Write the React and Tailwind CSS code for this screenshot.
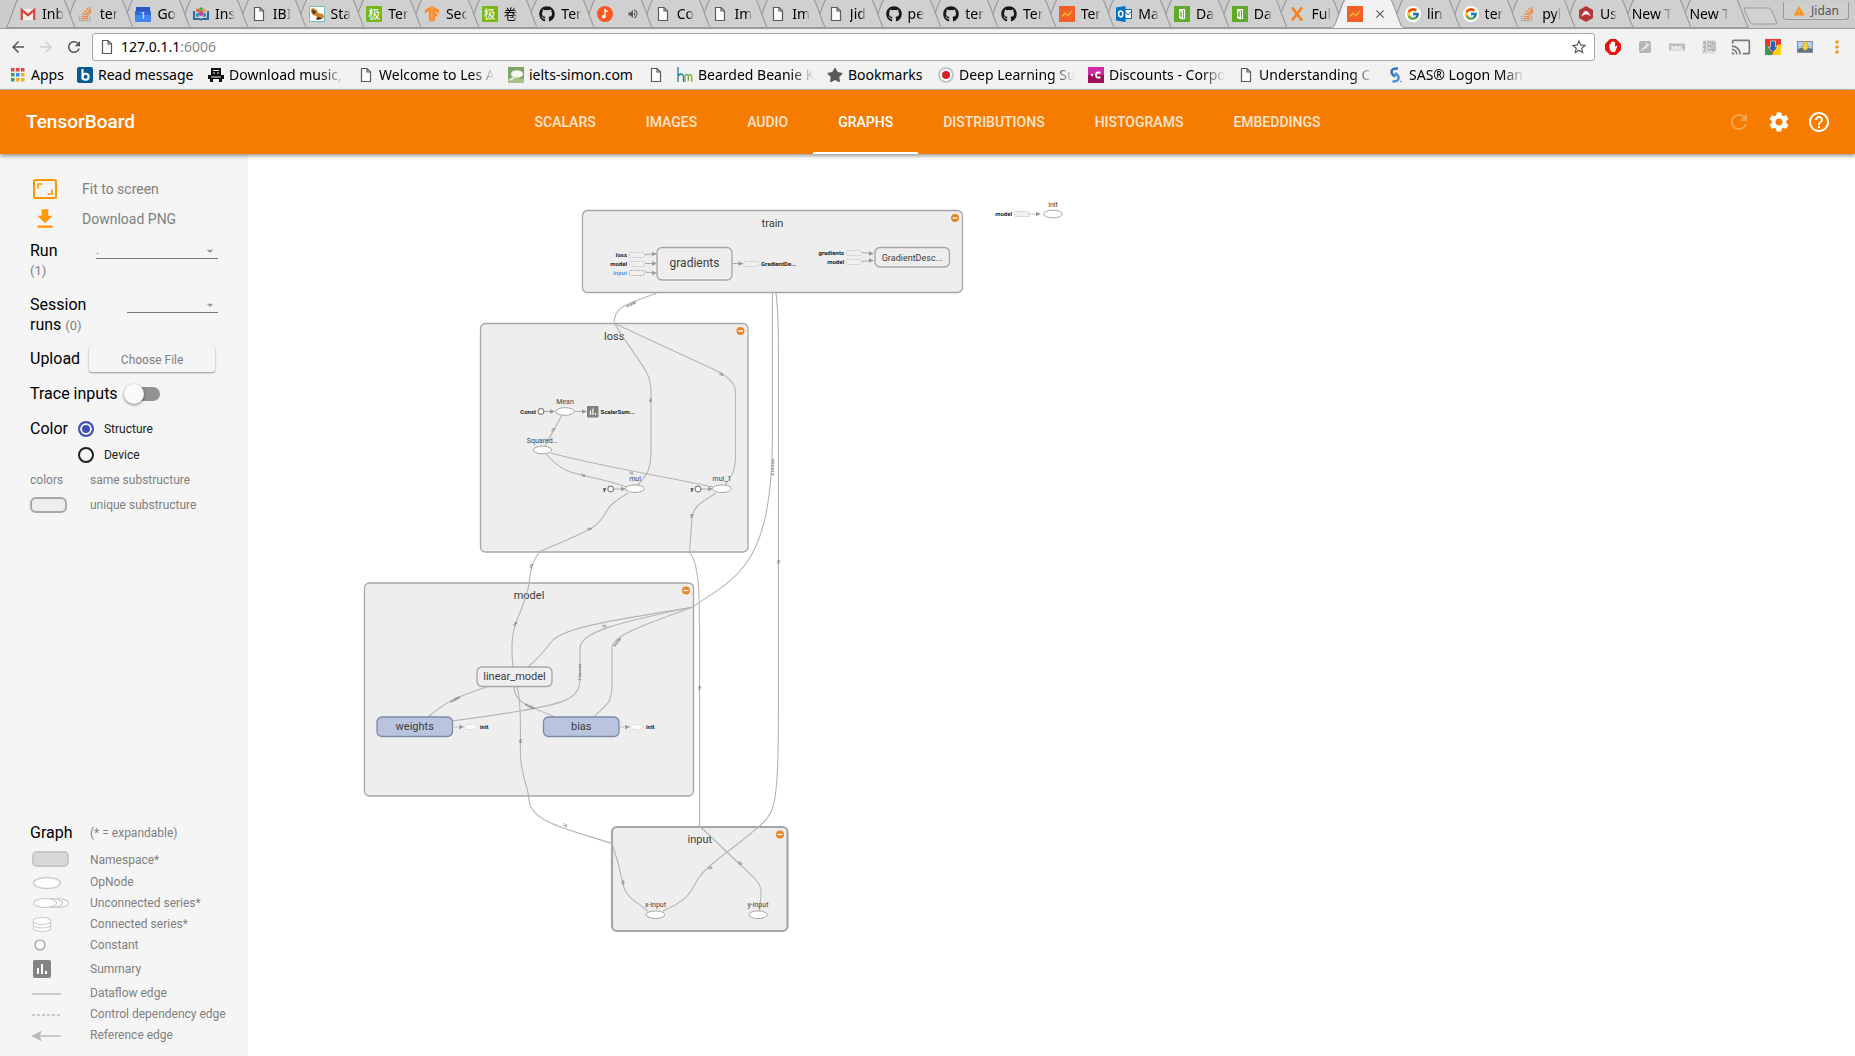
import React from "react";
import { FaGithub, FaStar } from "react-icons/fa";
import { FcGoogle } from "react-icons/fc";
import { SiTensorflow } from "react-icons/si";
import {
  MdRefresh,
  MdSettings,
  MdHelpOutline,
  MdArrowBack,
  MdArrowForward,
  MdStarBorder,
  MdCast,
  MdMoreVert,
  MdVolumeUp,
  MdWarning,
  MdArrowDropDown,
  MdFileDownload,
  MdClose,
} from "react-icons/md";

/* ---------- small icons ---------- */

const FileIcon = () => (
  <svg viewBox="0 0 16 16" className="h-4 w-4 shrink-0">
    <path d="M3.5 1.5h5.5l3.5 3.5v9.5h-9z" fill="#fdfdfd" stroke="#5a5a5a" strokeWidth="1.2" />
    <path d="M9 1.5v3.5h3.5" fill="none" stroke="#5a5a5a" strokeWidth="1.2" />
  </svg>
);

const Gmail = () => (
  <svg viewBox="0 0 16 16" className="h-4 w-4">
    <rect x="1" y="3" width="14" height="11" fill="#f1eeee" />
    <path d="M1.8 14V3.8L8 9.2l6.2-5.4V14" fill="none" stroke="#d5483b" strokeWidth="2.2" />
  </svg>
);

const StackOverflow = () => (
  <svg viewBox="0 0 16 16" className="h-4 w-4">
    <path d="M1.5 10v4.7h10.3V10" fill="none" stroke="#b3afab" strokeWidth="1.3" />
    <path d="M3.3 12.7h6.8M3.5 10.2l6.7.7M4.3 7.4l6.3 1.9M6 4.7l5.5 3.5M8.5 2.2l4 5M11.6.8l1.2 6" stroke="#ef8236" strokeWidth="1.2" />
  </svg>
);

const Calendar = () => (
  <svg viewBox="0 0 16 16" className="h-4 w-4">
    <rect x="1" y="1" width="14" height="6" fill="#2a56c6" />
    <rect x="0" y="5" width="16" height="11" rx="1" fill="#4285f4" />
    <rect x="0" y="5" width="16" height="4" fill="#3367d6" />
    <text x="8" y="12.5" fontSize="9" textAnchor="middle" fill="#fff" fontFamily="Roboto, sans-serif">1</text>
  </svg>
);

const BookPeople = () => (
  <svg viewBox="0 0 16 16" className="h-4 w-4">
    <path d="M0 5h2v7h5l1 1 1-1h5V5h2v9H9l-1 1-1-1H0z" fill="#2b6d96" />
    <circle cx="5" cy="4.5" r="1.9" fill="#e7653b" />
    <circle cx="11" cy="4.500" r="1.9" fill="#e2a13b" />
    <circle cx="8" cy="3" r="1.7" fill="#4a9a52" />
    <circle cx="8" cy="7.500" r="2.400" fill="#c64682" />
    <circle cx="4.500" cy="9" r="1.900" fill="#3b8fc6" />
    <circle cx="11.500" cy="9" r="1.900" fill="#3b8fc6" />
  </svg>
);

const Puppy = () => (
  <svg viewBox="0 0 16 16" className="h-4 w-4">
    <rect x="0.5" y="0.5" width="15" height="15" fill="#fff" stroke="#6fbcb9" />
    <path d="M2 3l2-1 4 2 1 3 5 1 1 3-2 2H9l-2-3-3-1-2-3z" fill="#c9832c" />
    <path d="M3 4l3 1 1 2-3 1zM7 12l4-1 2 2-5 1z" fill="#4a3015" />
  </svg>
);

const Ji = () => (
  <span className="flex h-4 w-4 items-center justify-center rounded-[1px] bg-[#78b614] font-['Noto_Sans_CJK_SC',sans-serif] text-[12px] leading-4 text-white">
    极
  </span>
);

const TF = () => <SiTensorflow className="h-4 w-4 text-[#ff8b22]" />;
const GitHub = () => <FaGithub className="h-4 w-4 text-[#191717]" />;
const Google = () => (
  <span className="flex h-4 w-4 items-center justify-center rounded-full bg-white">
    <FcGoogle className="h-[14px] w-[14px]" />
  </span>
);

const Music = () => (
  <svg viewBox="0 0 16 16" className="h-4 w-4">
    <circle cx="8" cy="8" r="8" fill="#fc5722" />
    <circle cx="6.8" cy="10.6" r="1.9" fill="#fff" />
    <path d="M8 11V3.6l2.6 2.2" fill="none" stroke="#fff" strokeWidth="1.3" />
  </svg>
);

const TensorBoardIcon = () => (
  <svg viewBox="0 0 16 16" className="h-4 w-4">
    <rect width="16" height="16" fill="#f1622b" />
    <path d="M3 10.5l3-3.2 3 2.4L13 5" fill="none" stroke="#fdb62f" strokeWidth="1.4" />
  </svg>
);

const Outlook = () => (
  <svg viewBox="0 0 16 16" className="h-4 w-4">
    <rect x="8" y="3.5" width="7.5" height="9" fill="#fff" stroke="#0072c6" />
    <path d="M8.5 5l3.5 4 3.5-4" fill="none" stroke="#0072c6" />
    <path d="M0 1.5L9.5 0v16L0 14.5z" fill="#0072c6" />
    <ellipse cx="4.7" cy="8" rx="2.1" ry="2.9" fill="none" stroke="#fff" strokeWidth="1.5" />
  </svg>
);

const DataDoor = () => (
  <svg viewBox="0 0 16 16" className="h-4 w-4">
    <rect width="16" height="16" fill="#5fab28" />
    <path d="M5.500 3.500h5v9h-2" fill="none" stroke="#fff" strokeWidth="1.200" />
    <path d="M5 3l4 1.800v9L5 12z" fill="#fff" />
    <path d="M6.300 5.200l1.400.6v5.500l-1.400-.6z" fill="#5fab28" />
  </svg>
);

const OrangeX = () => (
  <svg viewBox="0 0 16 16" className="h-4 w-4">
    <path d="M3 1.5l10 13M13 1.5L3 14.5" stroke="#f58220" strokeWidth="2.8" />
  </svg>
);

const RedHex = () => (
  <svg viewBox="0 0 16 16" className="h-4 w-4">
    <path d="M8 0l7 4v8l-7 4-7-4V4z" fill="#b3363a" />
    <path d="M3 10.5C5 8 5.500 5 8 5s3 3 5 5.500l-3-2H7z" fill="#fff" />
  </svg>
);

/* ---------- browser tabs ---------- */

const tabs = [
  [Gmail, "Inb"],
  [StackOverflow, "ter"],
  [Calendar, "Go"],
  [BookPeople, "Ins"],
  [FileIcon, "IBI"],
  [Puppy, "Sta"],
  [Ji, "Ter"],
  [TF, "Sec"],
  [Ji, "卷"],
  [GitHub, "Ter"],
  [Music, ""],
  [FileIcon, "Co"],
  [FileIcon, "Im"],
  [FileIcon, "Im"],
  [FileIcon, "Jid"],
  [GitHub, "pe"],
  [GitHub, "ter"],
  [GitHub, "Ter"],
  [TensorBoardIcon, "Ter"],
  [Outlook, "Ma"],
  [DataDoor, "Da"],
  [DataDoor, "Da"],
  [OrangeX, "Ful"],
  [TensorBoardIcon, null],
  [Google, "lin"],
  [Google, "ter"],
  [StackOverflow, "pyl"],
  [RedHex, "Us"],
  [null, "New T"],
  [null, "New T"],
];

const FADE = "[mask-image:linear-gradient(to_right,black_65%,transparent)]";
const FADE_LONG = "[mask-image:linear-gradient(to_right,black_80%,transparent)]";

function Tab({ icon: Icon, label, index }) {
  const active = label === null;
  return (
    <div className="relative h-[29px] min-w-0 flex-1" style={{ zIndex: active ? 50 : 40 - index }}>
      <svg viewBox="0 0 70 29" preserveAspectRatio="none" className="absolute -left-[6px] top-0 h-[29px] w-[calc(100%+12px)]">
        <path
          d="M0 28.500C3 27 9 3 12 0.500H58C61 3 67 27 70 28.500"
          fill={active ? "#f2f2f2" : "#d0d0d0"}
          stroke="#9b9b9b"
          strokeWidth="1.2"
        />
        <path d="M0 28.500H70" stroke={active ? "#f2f2f2" : "#9b9b9b"} />
      </svg>
      <div className={Icon ? "relative flex h-[29px] items-center gap-[6px] pl-2" : "relative flex h-[29px] items-center pl-1"}>
        {Icon && <span className="shrink-0"><Icon /></span>}
        {active ? (
          <button aria-label="Close tab" className="ml-1 text-[#5a5a5a]"><MdClose className="h-[14px] w-[14px]" /></button>
        ) : label === "" ? (
          <MdVolumeUp className="ml-2 h-3 w-3 text-[#5a5a5a]" />
        ) : (
          <span className={`${FADE} whitespace-nowrap text-[14px] leading-5`}>{label}</span>
        )}
      </div>
    </div>
  );
}

function TabStrip() {
  return (
    <div className="flex h-[29px] items-end border-b border-[#9b9b9b] bg-[#cccccc] pl-3">
      <div className="isolate flex min-w-0 flex-1">
        {tabs.map(([icon, label], i) => (
          <Tab key={i} icon={icon} label={label} index={i} />
        ))}
      </div>
      <button aria-label="New tab" className="mb-[3px] w-[34px]">
        <svg viewBox="0 0 34 18" className="h-[18px] w-[34px]">
          <path d="M1.500 1h24q2 0 3 2l5 12q.5 2-1.500 2h-22q-2 0-3-2l-5.500-12q-.7-2 1-2z" fill="#d2d2d2" stroke="#9b9b9b" />
        </svg>
      </button>
      <button className="mb-2 ml-[6px] mr-[6px] flex h-[18px] w-[66px] items-center justify-center gap-[6px] rounded-b-[3px] border border-t-0 border-[#999] bg-[#cfcfcf] text-[12px] leading-4 text-[#555]">
        <MdWarning className="h-3 w-3 text-[#fb9214]" />
        Jidan
      </button>
    </div>
  );
}

/* ---------- address bar ---------- */

const extensions = [
  <svg viewBox="0 0 16 16" className="h-4 w-4">
    <path d="M5 0h6l5 5v6l-5 5H5l-5-5V5z" fill="#e8130f" />
    <path d="M4.500 8V5h1.300V3h1.400v-.8h1.500V3h1.400v5l1.200-1.500 1 .8L10 13H6.500q-2-2-2-5z" fill="#fff" />
  </svg>,
  <svg viewBox="0 0 16 16" className="h-4 w-4">
    <rect x="2" y="2" width="12" height="12" rx="2" fill="#b5b5b5" />
    <path d="M4.500 11.500l5-5M9 3.500l.6 1.700L11.500 6 9.800 7 9 9 8 7" stroke="#ececec" strokeWidth="1.300" fill="none" />
  </svg>,
  <svg viewBox="0 0 16 16" className="h-4 w-4">
    <rect y="4.500" width="16" height="7" fill="#bdbdbd" />
    <text x="8" y="10.500" fontSize="6" fontWeight="700" textAnchor="middle" fill="#fff" fontFamily="Roboto, sans-serif">XML</text>
  </svg>,
  <svg viewBox="0 0 16 16" className="h-4 w-4">
    <rect x="1" y="1" width="14" height="14" fill="#e2e2e2" />
    <path d="M2 4h3M2 8h3M4 2v11M7 3h3v8H7zM7 7h3M12 2v11M11 4h3v7h-3M2 13l3-2" stroke="#b0b0b0" fill="none" strokeWidth="1.300" />
  </svg>,
  <MdCast className="h-5 w-5 text-[#7a7a7a]" />,
  <svg viewBox="0 0 16 16" className="h-4 w-4">
    <rect width="16" height="16" fill="#e6392b" />
    <path d="M0 3l7 13H0z" fill="#2ba24c" />
    <path d="M16 5v11H7l5-10z" fill="#fdd00b" />
    <path d="M5.500 2h5v6H13l-5 5.500L3 8h2.500z" fill="#2765b0" stroke="#fff" strokeWidth=".6" />
  </svg>,
  <svg viewBox="0 0 16 16" className="h-4 w-4">
    <rect x=".5" y="2.500" width="15" height="11" fill="#b3d0ee" stroke="#8c8c8c" />
    <path d="M1 10l4-1.500 10 1V13H1z" fill="#5d7386" />
    <path d="M6.500 2.500h3.500v5h2.500L8.300 12 4 7.500h2.500z" fill="#f6d33c" stroke="#b18a12" strokeWidth=".5" />
  </svg>,
  <MdMoreVert className="h-5 w-5 text-[#fb9214]" />,
];

function AddressBar() {
  return (
    <div className="flex h-[35px] items-center">
      <div className="flex w-[92px] items-center gap-[10px] pl-[9px] text-[#555]">
        <button aria-label="Back"><MdArrowBack className="h-[18px] w-[18px]" /></button>
        <button aria-label="Forward" className="text-[#d0d0d0]"><MdArrowForward className="h-[18px] w-[18px]" /></button>
        <button aria-label="Reload"><MdRefresh className="h-[18px] w-[18px]" /></button>
      </div>
      <div className="flex h-7 min-w-0 flex-1 items-center gap-[6px] rounded-[3px] border border-[#a9a9a9] bg-white px-[6px]">
        <FileIcon />
        <span className="relative h-5 flex-1 text-[14px] leading-5">
          <input aria-label="Address" defaultValue="127.0.1.1:6006" className="h-5 w-full bg-transparent text-transparent outline-none" />
          <span aria-hidden="true" className="pointer-events-none absolute inset-0">127.0.1.1<span className="text-[#8a8a8a]">:6006</span></span>
        </span>
        <button aria-label="Bookmark this page" className="text-[#5a5a5a]"><MdStarBorder className="h-[18px] w-[18px]" /></button>
      </div>
      <div className="flex w-[260px] items-center pl-[2px]">
        {extensions.map((icon, i) => (
          <button key={i} aria-label={`Extension ${i + 1}`} className="flex w-8 items-center justify-center">{icon}</button>
        ))}
      </div>
    </div>
  );
}

/* ---------- bookmarks ---------- */

const AppsIcon = () => (
  <svg viewBox="0 0 16 16" className="h-4 w-4 shrink-0">
    {["#e8453c", "#e8453c", "#e8453c", "#34a05c", "#3b8bf0", "#f2b01e", "#34a05c", "#f2b01e", "#f2b01e"].map((c, i) => (
      <rect key={i} x={1 + (i % 3) * 5} y={1 + Math.floor(i / 3) * 5} width="3.500" height="3.500" fill={c} />
    ))}
  </svg>
);

const BIcon = () => (
  <svg viewBox="0 0 16 16" className="h-4 w-4 shrink-0">
    <rect width="16" height="16" rx="2" fill="#0c5a94" />
    <path d="M5.500 2v10.500" stroke="#fff" strokeWidth="2" />
    <circle cx="8.600" cy="9.800" r="3" fill="none" stroke="#fff" strokeWidth="2" />
  </svg>
);

const DiskIcon = () => (
  <svg viewBox="0 0 16 16" className="h-4 w-4 shrink-0">
    <path d="M3 1h10v7H3zM0 8h16v4H0zM2 12h3v3H2zM11 12h3v3h-3z" fill="#111" />
    <path d="M5 3.500h6M5 6h2M9 6h2M3 10h10M6 13.500h4" stroke="#eee" />
  </svg>
);

const LeafIcon = () => (
  <svg viewBox="0 0 16 16" className="h-4 w-4 shrink-0">
    <rect width="16" height="16" fill="#7ea565" />
    <ellipse cx="9" cy="7" rx="6" ry="3.800" fill="#f4f7f0" />
    <path d="M0 12q4-3 9-1t7 0v5H0z" fill="#a9c38e" />
    <path d="M2 13q3-1 5-4" stroke="#f4f7f0" fill="none" strokeWidth="1.500" />
  </svg>
);

const HmIcon = () => (
  <svg viewBox="0 0 16 16" className="h-4 w-4 shrink-0">
    <path d="M1 0v15M1 9q3-4 5.500 0v6" fill="none" stroke="#1c7f9c" strokeWidth="1.300" />
    <path d="M8 15V9q1.700-3 3.300 0v5M11.300 9q1.700-3 3.500 0v6" fill="none" stroke="#74ac3c" strokeWidth="1.300" />
  </svg>
);

const StarIcon = () => <FaStar className="h-4 w-4 shrink-0 text-[#5a5a5a]" />;

const RedDot = () => (
  <svg viewBox="0 0 16 16" className="h-4 w-4 shrink-0">
    <circle cx="8" cy="8" r="7" fill="#fff" stroke="#c6c6c6" strokeWidth="2" />
    <circle cx="8" cy="8" r="4" fill="#d91f26" />
  </svg>
);

const CIcon = () => (
  <svg viewBox="0 0 16 16" className="h-4 w-4 shrink-0">
    <rect width="16" height="8" fill="#d12ba5" />
    <rect y="8" width="16" height="8" fill="#9c1155" />
    <path d="M12.500 5.500H10Q8 5.500 8 8t2 2.500h2.500" fill="none" stroke="#fff" strokeWidth="1.800" />
    <circle cx="4" cy="8" r="1.200" fill="#fff" />
  </svg>
);

const SasIcon = () => (
  <svg viewBox="0 0 16 16" className="h-4 w-4 shrink-0">
    <path d="M10 1.500Q3.500 1 3.500 5q0 2.500 4 4.500" fill="none" stroke="#2f78c4" strokeWidth="2.500" />
    <path d="M4.500 14.500q6.500 0 6-4Q10.500 8 7 6" fill="none" stroke="#4b93dc" strokeWidth="2.500" />
    <circle cx="13" cy="14.500" r=".8" fill="#2f78c4" />
  </svg>
);

const bookmarks = [
  [AppsIcon, "Apps", "w-[33px]"],
  [BIcon, "Read message", "w-[97px]"],
  [DiskIcon, "Download music,", "w-[116px]", true],
  [FileIcon, "Welcome to Les A", "w-[116px]", true],
  [LeafIcon, "ielts-simon.com", "w-[106px]"],
  [FileIcon, "", "w-0"],
  [HmIcon, "Bearded Beanie K", "w-[116px]", true],
  [StarIcon, "Bookmarks", "w-[77px]"],
  [RedDot, "Deep Learning Su", "w-[116px]", true],
  [CIcon, "Discounts - Corpo", "w-[116px]", true],
  [FileIcon, "Understanding C", "w-[116px]", true],
  [SasIcon, "SAS® Logon Man", "w-[116px]", true],
];

function Bookmarks() {
  return (
    <nav className="flex h-[26px] items-center gap-[13px] border-b border-[#b5b5b5] pb-[3px] pl-[10px]">
      {bookmarks.map(([Icon, label, width, fade], i) => (
        <a key={i} href="#" aria-label={label || "Untitled"} className={label ? "flex items-center gap-[5px]" : "flex items-center"}>
          <Icon />
          <span className={`${width} ${fade ? FADE_LONG : ""} whitespace-nowrap text-[14px] leading-5`}>{label}</span>
        </a>
      ))}
    </nav>
  );
}

/* ---------- application header ---------- */

const sections = ["SCALARS", "IMAGES", "AUDIO", "GRAPHS", "DISTRIBUTIONS", "HISTOGRAMS", "EMBEDDINGS"];

function Header() {
  return (
    <header className="relative z-10 grid h-16 grid-cols-[1fr_auto_1fr] items-center bg-[#f57c00] px-[26px] text-white shadow-[0_2px_4px_rgba(0,0,0,0.4)]">
      <h1 className="text-[19px] font-medium leading-6">TensorBoard</h1>
      <nav className="flex h-16">
        {sections.map((s) => (
          <a
            key={s}
            href="#"
            className={
              s === "GRAPHS"
                ? "flex items-center border-b-2 border-t-2 border-b-white border-t-transparent px-[25px] text-[14px] font-medium"
                : "flex items-center px-[25px] text-[14px] font-medium text-white/80"
            }
          >
            {s}
          </a>
        ))}
      </nav>
      <div className="-mr-[2px] flex justify-end gap-4">
        <button aria-label="Reload" disabled className="text-white/30"><MdRefresh className="h-6 w-6" /></button>
        <button aria-label="Settings"><MdSettings className="h-6 w-6" /></button>
        <button aria-label="Help"><MdHelpOutline className="h-6 w-6" /></button>
      </div>
    </header>
  );
}

/* ---------- side panel ---------- */

const legend = [
  ["Namespace*", "h-[22px]", <rect x="3" y="0" width="35" height="14" rx="4" fill="#d8d8d8" stroke="#c8c8c8" strokeWidth="2" />],
  ["OpNode", "h-[21px]", <ellipse cx="17" cy="9" rx="13.500" ry="5.500" fill="#fff" stroke="#ccc" strokeWidth="1.500" />],
  [
    "Unconnected series*",
    "h-[21px]",
    <g fill="#fff" stroke="#ccc" strokeWidth="1.200">
      <ellipse cx="27" cy="8" rx="11.500" ry="4.500" />
      <ellipse cx="21" cy="8" rx="11.500" ry="4.500" />
      <ellipse cx="15" cy="8" rx="11.500" ry="4.500" />
    </g>,
  ],
  [
    "Connected series*",
    "h-[21px]",
    <g fill="#fff" stroke="#ccc" strokeWidth="1.200">
      <ellipse cx="12" cy="12" rx="9" ry="3.500" />
      <ellipse cx="12" cy="8.500" rx="9" ry="3.500" />
      <ellipse cx="12" cy="5" rx="9" ry="3.500" />
    </g>,
  ],
  ["Constant", "h-[21px]", <circle cx="10" cy="8" r="5" fill="#fff" stroke="#999" strokeWidth="1.200" />],
  [
    "Summary",
    "h-[27px]",
    <g>
      <rect x="3" y="-1" width="18" height="18" rx="2" fill="#848484" />
      <path d="M8 13V7M12 13V3M16 13v-3" stroke="#fff" strokeWidth="2" />
    </g>,
  ],
  ["Dataflow edge", "h-[21px]", <path d="M2 9h29" stroke="#bbb" strokeWidth="1.500" />],
  ["Control dependency edge", "h-[21px]", <path d="M2 9h29" stroke="#bbb" strokeWidth="1.300" strokeDasharray="3 2" />],
  [
    "Reference edge",
    "h-[21px]",
    <g>
      <path d="M8 9h23" stroke="#bbb" strokeWidth="1.500" />
      <path d="M1 9l11-5.500-2.500 5.500 2.500 5.500z" fill="#bbb" />
    </g>,
  ],
];

function Picker({ label, width, children }) {
  return (
    <div className={`${width} relative h-[18px] border-b border-[#757575]`}>
      <select aria-label={label} className="block h-full w-full appearance-none bg-transparent text-[12px] leading-4 text-[#808080] outline-none">
        {children}
      </select>
      <MdArrowDropDown className="pointer-events-none absolute right-0 top-[2px] h-4 w-4 text-[#9a9a9a]" />
    </div>
  );
}

function Sidebar() {
  return (
    <aside className="flex w-[248px] shrink-0 flex-col justify-between bg-[#f5f5f5] pb-[11px] pl-[30px] pt-5 text-[12px] text-[#808080]">
      <div>
        <button className="flex h-[30px] w-full items-center text-left text-[14px]">
          <svg viewBox="0 0 24 20" className="ml-[3px] mr-[25px] h-5 w-6">
            <rect x="1" y="1" width="22" height="18" rx="1.500" fill="none" stroke="#ff9800" strokeWidth="2" />
            <path d="M5 9.500V5h4.500M19 10.500V15h-4.500" fill="none" stroke="#ff9800" strokeWidth="1.600" />
          </svg>
          Fit to screen
        </button>
        <button className="flex h-[30px] w-full items-center text-left text-[14px]">
          <MdFileDownload className="ml-[2px] mr-6 h-[26px] w-[26px] text-[#ff9800]" />
          Download PNG
        </button>
        <div className="mt-[7px] flex h-[52px] items-start pr-[30px]">
          <div className="flex-1 leading-5">
            <div className="text-[16px] text-black">Run</div>
            <div className="text-[13px]">(1)</div>
          </div>
          <Picker label="Run" width="w-[122px]"><option>.</option></Picker>
        </div>
        <div className="mt-[2px] flex h-[40px] items-start pr-[30px]">
          <div className="flex-1 text-[16px] leading-5 text-black">
            Session<br />runs <span className="text-[13px] text-[#808080]">(0)</span>
          </div>
          <Picker label="Session runs" width="w-[91px]" />
        </div>
        <div className="mt-[10px] flex h-[28px] items-center gap-[9px]">
          <span className="text-[16px] text-black">Upload</span>
          <button className="h-[26px] w-[126px] rounded-[3px] bg-[#f5f5f5] pt-[2px] text-[12px] shadow-[0_1px_2px_rgba(0,0,0,0.4)]">Choose File</button>
        </div>
        <label className="mt-2 flex h-[26px] items-center gap-[6px] text-[16px] text-black">
          Trace inputs
          <span className="relative flex h-5 w-9 items-center">
            <input type="checkbox" role="switch" className="ml-auto h-[14px] w-7 appearance-none rounded-full bg-[#929292]" />
            <span className="pointer-events-none absolute left-0 top-0 h-5 w-5 rounded-full bg-[#fafafa] shadow-[0_1px_3px_rgba(0,0,0,0.5)]" />
          </span>
        </label>
        <div className="mt-[9px] flex gap-[10px]">
          <span className="text-[16px] leading-[26px] text-black">Color</span>
          <div className="text-[12px] text-[#212121]">
            <label className="flex h-[26px] items-center gap-[10px]">
              <input type="radio" name="color" defaultChecked className="h-4 w-4 appearance-none rounded-full border-2 border-[#3f51b5] bg-[#3f51b5] shadow-[inset_0_0_0_2px_#f5f5f5]" />
              Structure
            </label>
            <label className="flex h-[26px] items-center gap-[10px]">
              <input type="radio" name="color" className="h-4 w-4 appearance-none rounded-full border-2 border-[#212121]" />
              Device
            </label>
          </div>
        </div>
        <div className="grid grid-cols-[60px_1fr] leading-[25px]">
          <span>colors</span>
          <span>same substructure</span>
          <span className="mt-[4px] h-4 w-[37px] rounded-[6px] border-2 border-[#a8a8a8] bg-[#eee]" />
          <span>unique substructure</span>
        </div>
      </div>
      <div>
        <div className="mb-[6px] flex h-[21px] items-center">
          <span className="w-[60px] text-[16px] text-black">Graph</span>
          <span>(* = expandable)</span>
        </div>
        {legend.map(([name, height, shape]) => (
          <div key={name} className={`${height} flex items-center`}>
            <svg viewBox="0 0 60 16" className="h-4 w-[60px] overflow-visible">{shape}</svg>
            <span className="whitespace-nowrap">{name}</span>
          </div>
        ))}
      </div>
    </aside>
  );
}

/* ---------- graph ---------- */

function Scope({ x, y, w, h, title, thick }) {
  return (
    <g>
      <rect x={x} y={y} width={w} height={h} rx="5" fill="#eee" stroke="#a6a6a6" strokeWidth={thick ? 2.2 : 1.3} />
      <text x={x + w / 2} y={y + 16} fontSize="11" textAnchor="middle" fill="#3d3d3d">{title}</text>
      <circle cx={x + w - 7.500} cy={y + 7.500} r="4" fill="#e98325" />
      <path d={`M${x + w - 10} ${y + 7.500}h5`} stroke="#fff" strokeWidth="1.300" />
    </g>
  );
}

function Node({ x, y, w, h, title, size = 11, blue }) {
  return (
    <g>
      <rect x={x} y={y} width={w} height={h} rx="5" fill={blue ? "#b9c5de" : "#eee"} stroke={blue ? "#7d8aa5" : "#a6a6a6"} strokeWidth="1.300" />
      <text x={x + w / 2} y={y + h / 2 + 3.500} fontSize={size} textAnchor="middle" fill="#3d3d3d">{title}</text>
    </g>
  );
}

const Op = ({ x, y, title, dy = -8 }) => (
  <g>
    <ellipse cx={x} cy={y} rx="9.300" ry="3.800" fill="#fff" stroke="#a6a6a6" />
    <text x={x} y={y + dy} fontSize="7" textAnchor="middle" fill="#444">{title}</text>
  </g>
);

const Stub = ({ x, y, dark }) => (
  <rect x={x} y={y - 2.500} width="15" height="5" rx="1.500" fill="#f0f0f0" stroke={dark ? "#999" : "#bbb"} strokeWidth=".8" strokeDasharray="1.500 1" />
);

const Note = ({ x, y, children, end, color = "#222" }) => (
  <text x={x} y={y + 2} fontSize="6" fontWeight="700" fill={color} textAnchor={end ? "end" : "start"}>{children}</text>
);

function Arrow({ x1, y1, x2, y2, dashed }) {
  return (
    <g>
      <path d={`M${x1} ${y1}L${x2 - 3} ${y2}`} stroke="#aaa" strokeDasharray={dashed ? "1.500 1" : undefined} />
      <path d={`M${x2} ${y2}l-5 -2.200v4.400z`} fill="#9a9a9a" />
    </g>
  );
}

const Const = ({ x, y }) => <circle cx={x} cy={y} r="2.800" fill="#fff" stroke="#888" strokeWidth="1.200" />;

const edges = [
  // train to its inputs
  "M657 293L638 300C622 306 614 310 614 323.500",
  "M772.500 292V430C772.500 500 764 540 745 565C730 585 712 593 693 607",
  "M776 293C778 310 778.500 330 778.500 350V700C778.500 770 777 800 771 812C765 824 757 828 750 834C730 851 710 863 700 876C690 891 692 898 663 911",
  // inside loss
  "M614.500 323.500C640 365 651 370 651 392V450C651 472 646 475 638 485",
  "M614.500 323.500L715 370Q735.500 380 735.500 392V455C735.500 472 732 475 725 485",
  "M562 415L545 446",
  "M546 454C560 470 570 473 590 477Q612 482 627 487",
  "M551 453C590 464 640 472 713 487",
  // loss to model and input
  "M628 493C612 503 609 506 605 514C597 528 590 530 540 551.500C531 562 530 575 529 583C527 605 512 620 512 645Q512 660 513 667",
  "M716 493C700 503 693 507 692 518L689.500 552C700 565 699.500 600 699.500 640V826L730 855C745 870 760 880 761 890C761.500 900 760 902 759.500 911",
  // inside model
  "M693 607C630 618 570 625 553 640C545 649 545 652 528 667",
  "M693 607C620 622 580 632 580 648V680C580 700 560 704 520 711Q490 716 452 721",
  "M693 607C640 626 612 636 612 648V685C612 705 604 706 594 717",
  "M487 687C455 697 443 704 428 717",
  "M514 687C514 700 523 705 556 717",
  "M517 687C523 705 519 750 521 762C523 780 529 790 529 800C530 822 570 830 612 843.500",
  // inside input
  "M612 843.500C622 872 622 884 625 890C629 899 637 902 648 911",
];

const edgeLabels = [
  [631, 304, -25, "scalar"],
  [650.500, 400, 90, "16"],
  [721, 374, 30, "16"],
  [553, 430, -60, "16"],
  [583, 475, 17, "16"],
  [631, 473, 10, "16"],
  [589, 529, -25, "16"],
  [691, 516, -90, "16"],
  [531, 566, -70, "16"],
  [772.500, 467, -90, "4 tensors"],
  [778.500, 562, -90, "16"],
  [699.500, 688, -90, "16"],
  [604, 626, -10, "16"],
  [515, 624, -75, "16"],
  [579.500, 672, -90, "2 tensors"],
  [617, 642, -50, "scalar"],
  [455, 699, -27, "scalar"],
  [530, 706, 25, "scalar"],
  [520.500, 741, 90, "16"],
  [565, 825, 20, "16"],
  [623, 882, 75, "16"],
  [710, 868, -40, "16"],
  [740, 863, 42, "16"],
];

function Graph() {
  return (
    <svg viewBox="248 154 1607 902" className="block h-auto w-full font-[Roboto,sans-serif]" role="img" aria-label="Computation graph">
      <Scope x={582.5} y={210.5} w={380} h={82} title="train" />
      <Scope x={480.5} y={323.5} w={267.5} h={228.5} title="loss" />
      <Scope x={364.5} y={583} w={329} h={213} title="model" />
      <Scope x={612} y={827} w={175.5} h={104} title="input" thick />

      <g fill="none" stroke="#b5b5b5" strokeWidth="1.1">
        {edges.map((d) => <path key={d} d={d} />)}
      </g>
      {edgeLabels.map(([x, y, a, t], i) => (
        <text key={i} x={x} y={y + 1.500} fontSize="4" fontWeight="500" textAnchor="middle" fill="#666" transform={`rotate(${a} ${x} ${y})`}>{t}</text>
      ))}

      {/* train */}
      <Node x={657} y={247.500} w={75} h={32.500} title="gradients" size={12} />
      <Note x={627} y={255} end>loss</Note>
      <Note x={627} y={264} end>model</Note>
      <Note x={627} y={273} end color="#5b9bf0">input</Note>
      <Stub x={629.500} y={255} /><Stub x={629.500} y={264} /><Stub x={629.500} y={273} dark />
      <Arrow x1={645} y1={254.500} x2={657} y2={254} />
      <Arrow x1={645} y1={263.500} x2={657} y2={263.500} />
      <Arrow x1={645} y1={272} x2={657} y2={273} />
      <Arrow x1={732} y1={263.500} x2={743.500} y2={263.500} />
      <Stub x={744} y={264} />
      <Note x={761} y={264}>GradientDe...</Note>
      <Note x={844} y={253} end>gradients</Note>
      <Note x={844} y={262} end>model</Note>
      <Stub x={846.500} y={253} /><Stub x={846.500} y={262} />
      <Arrow x1={862} y1={252.500} x2={874} y2={253.500} />
      <Arrow x1={862} y1={261.500} x2={874} y2={260.500} />
      <Node x={875} y={247.500} w={74.500} h={19.500} title="GradientDesc..." size={9} />

      {/* stand-alone init */}
      <Note x={1012} y={214} end>model</Note>
      <Stub x={1014.500} y={214} />
      <Arrow x1={1029} y1={214} x2={1041} y2={214} dashed />
      <Op x={1053} y={214} title="init" dy={-7} />

      {/* loss */}
      <Note x={536} y={412} end>Const</Note>
      <Arrow x1={544} y1={411.500} x2={555} y2={411.500} />
      <Const x={541} y={411.500} />
      <Arrow x1={575} y1={411.500} x2={587} y2={411.500} />
      <Op x={565} y={411.500} title="Mean" />
      <rect x="587" y="406" width="11.500" height="11.500" rx="1" fill="#808080" />
      <path d="M590.500 415v-4.500M593 415v-6.500M595.500 415v-2" stroke="#fff" strokeWidth="1.200" />
      <Note x={600.500} y={412}>ScalarSum...</Note>
      <Op x={542.500} y={450} title="Squared..." dy={-7} />
      <Arrow x1={614} y1={489} x2={626} y2={489} />
      <Const x={610.700} y={489} />
      <Note x={606} y={489} end>y</Note>
      <Op x={635} y={488.700} title="mul" />
      <Arrow x1={701} y1={489} x2={713} y2={489} />
      <Const x={698} y={489} />
      <Note x={693.500} y={489} end>y</Note>
      <Op x={722} y={488.700} title="mul_1" />

      {/* model */}
      <Node x={477} y={667} w={75} h={19.500} title="linear_model" />
      <Node x={377} y={717} w={75.500} h={19.500} title="weights" blue />
      <Node x={543.500} y={717} w={75.500} h={19.500} title="bias" blue />
      <Arrow x1={454} y1={727} x2={464} y2={727} dashed />
      <ellipse cx="471" cy="727" rx="6" ry="2.500" fill="#fff" stroke="#ccc" strokeWidth=".8" strokeDasharray="1.500 1" />
      <Note x={480} y={727}>init</Note>
      <Arrow x1={620} y1={727} x2={630} y2={727} dashed />
      <ellipse cx="637" cy="727" rx="6" ry="2.500" fill="#fff" stroke="#ccc" strokeWidth=".8" strokeDasharray="1.500 1" />
      <Note x={646} y={727}>init</Note>

      {/* input */}
      <Op x={655.500} y={914.700} title="x-input" />
      <Op x={758} y={914.700} title="y-input" />
    </svg>
  );
}

export default function App() {
  return (
    <div className="flex min-h-screen flex-col bg-white">
      <div className="bg-[#f2f2f2] font-['Noto_Sans','Noto_Sans_CJK_SC',sans-serif] text-black">
        <TabStrip />
        <AddressBar />
        <Bookmarks />
      </div>
      <div className="flex flex-1 flex-col font-[Roboto,sans-serif]">
        <Header />
        <main className="flex flex-1">
          <Sidebar />
          <div className="min-w-0 flex-1 overflow-hidden">
            <Graph />
          </div>
        </main>
      </div>
    </div>
  );
}
